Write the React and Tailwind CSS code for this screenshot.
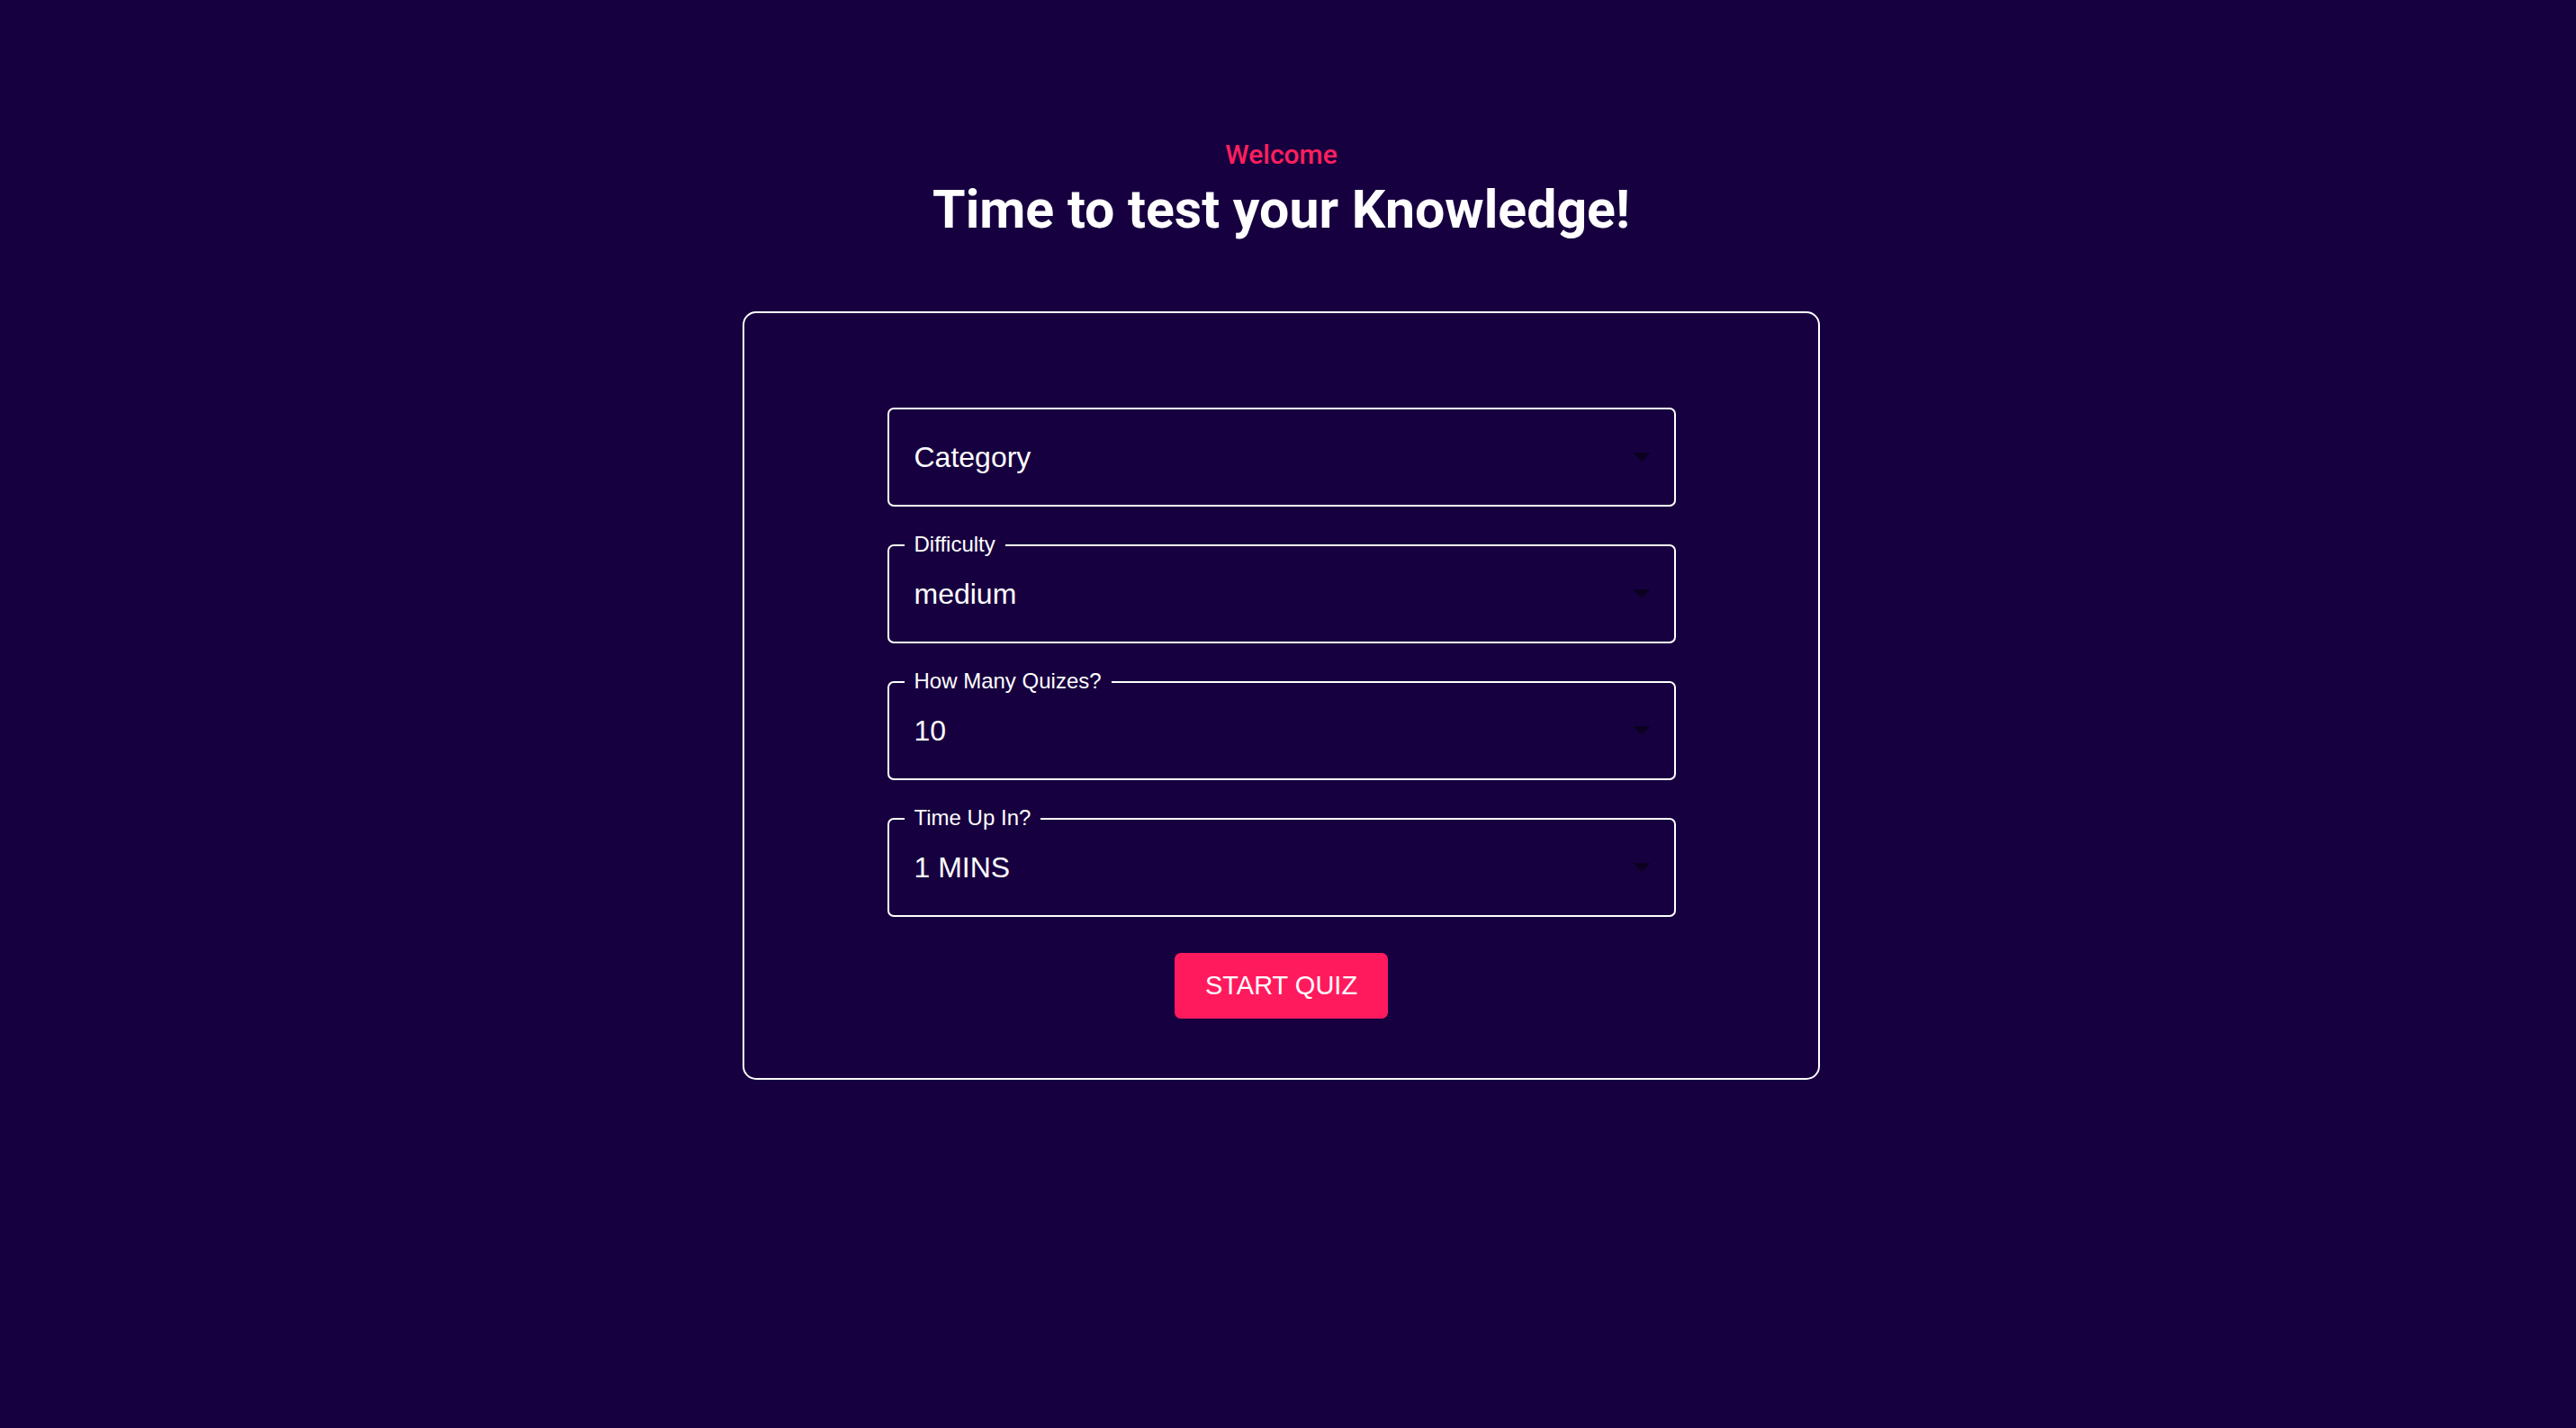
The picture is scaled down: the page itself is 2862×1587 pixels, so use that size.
import React, { useState } from 'react';

const fields = [
  { key: 'category', label: null, value: 'Category' },
  { key: 'difficulty', label: 'Difficulty', value: 'medium' },
  { key: 'amount', label: 'How Many Quizes?', value: '10' },
  { key: 'time', label: 'Time Up In?', value: '1 MINS' },
];

function SelectBox({ label, value }) {
  return (
    <div className="relative flex h-[110px] w-full items-center rounded-[7px] border-2 border-white pl-[28px] pr-[26px]">
      {label && (
        <span className="absolute -top-[16px] left-[17px] bg-[#170040] px-[11px] text-[24px] leading-[28px] text-white">
          {label}
        </span>
      )}
      <span className="flex-1 text-[32px] leading-[40px] text-white">{value}</span>
      <svg width="20" height="10" viewBox="0 0 20 10" className="shrink-0">
        <path d="M0 0 L20 0 L10 10 Z" fill="#0b0020" />
      </svg>
    </div>
  );
}

export default function App() {
  const [started, setStarted] = useState(false);

  return (
    <div className="min-h-[1587px] w-full bg-[#170040] pr-[15px] font-['Liberation_Sans',Arial,sans-serif]">
      <div className="flex flex-col items-center pt-[154px]">
        <p className="font-['Roboto',sans-serif] text-[30px] font-medium leading-[36px] text-[#ff1f5d]">
          Welcome
        </p>
        <h1 className="mt-[8px] font-['Roboto',sans-serif] text-[59px] font-bold leading-[70px] text-white">
          Time to test your Knowledge!
        </h1>

        <div className="mt-[78px] flex w-[1197px] flex-col items-center rounded-[15px] border-2 border-white pb-[66px] pt-[105px]">
          <div className="flex w-[876px] flex-col gap-[42px]">
            {fields.map((f) => (
              <SelectBox key={f.key} label={f.label} value={f.value} />
            ))}
          </div>
          <button
            onClick={() => setStarted(!started)}
            className="mt-[40px] h-[73px] w-[237px] rounded-[7px] bg-[#ff1a5e] text-[29px] uppercase text-white"
          >
            Start Quiz
          </button>
        </div>
      </div>
    </div>
  );
}
